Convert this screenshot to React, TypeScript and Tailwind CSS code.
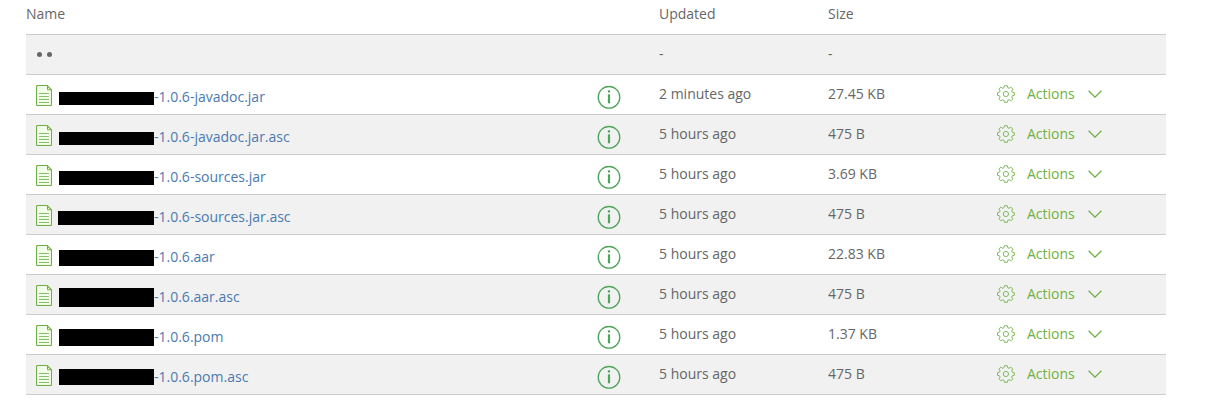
import { clsx } from 'clsx'

type FileRow = {
  suffix: string
  updated: string
  size: string
  mask: string
}

const files: FileRow[] = [
  { suffix: '-1.0.6-javadoc.jar', updated: '2 minutes ago', size: '27.45 KB', mask: 'w-[95px] h-[13px] mt-0.5' },
  { suffix: '-1.0.6-javadoc.jar.asc', updated: '5 hours ago', size: '475 B', mask: 'w-[95px] h-[13px] mt-0.5' },
  { suffix: '-1.0.6-sources.jar', updated: '5 hours ago', size: '3.69 KB', mask: 'w-[95px] h-[14px] mt-0.5' },
  { suffix: '-1.0.6-sources.jar.asc', updated: '5 hours ago', size: '475 B', mask: 'w-[96px] h-[14px] mt-0.5' },
  { suffix: '-1.0.6.aar', updated: '5 hours ago', size: '22.83 KB', mask: 'w-[95px] h-[16px] mt-0.5' },
  { suffix: '-1.0.6.aar.asc', updated: '5 hours ago', size: '475 B', mask: 'w-[95px] h-[19px]' },
  { suffix: '-1.0.6.pom', updated: '5 hours ago', size: '1.37 KB', mask: 'w-[95px] h-[17px]' },
  { suffix: '-1.0.6.pom.asc', updated: '5 hours ago', size: '475 B', mask: 'w-[95px] h-[16px]' },
]

function DocumentIcon() {
  return (
    <svg width="16" height="21" viewBox="0 0 16 21" fill="none" stroke="#6db144" aria-hidden="true">
      <path d="M.5 1.5a1 1 0 0 1 1-1h9.7l4.3 4.3v14.7a1 1 0 0 1-1 1h-13a1 1 0 0 1-1-1z" fill="#f3fbec" strokeWidth="1.1" />
      <path d="M11.5.8v4h3.8" />
      <path d="M3 8.5h10M3 11.5h10M3 14.5h10M3 17.5h10" strokeWidth=".8" />
    </svg>
  )
}

function InfoIcon() {
  return (
    <svg width="24" height="24" viewBox="0 0 24 24" fill="none" stroke="#4fa65b" aria-hidden="true">
      <circle cx="12" cy="12.3" r="10.8" strokeWidth="1.3" />
      <path d="M12 9.3v9" strokeWidth="2.2" />
      <path d="M12 5.3v2.2" strokeWidth="2.2" />
    </svg>
  )
}

function GearIcon() {
  return (
    <svg width="18" height="18" viewBox="0 0 18 18" fill="none" stroke="#7fbb5c" strokeLinejoin="round" aria-hidden="true">
      <path d="M7.1.3h2.8l.5 2 1.3.6 1.8-1.1 1.9 1.9-1.1 1.8.6 1.3 2 .5v2.6l-2 .5-.6 1.3 1.1 1.8-1.9 1.9-1.8-1.1-1.3.6-.5 2H7.1l-.5-2-1.3-.6-1.8 1.1-1.9-1.9 1.1-1.8-.6-1.3-2-.5V7.3l2-.5.6-1.3-1.1-1.8 1.9-1.9 1.8 1.1 1.3-.6z" transform="translate(.4 .4)" />
      <circle cx="8.9" cy="9" r="2.6" />
    </svg>
  )
}

function ChevronIcon() {
  return (
    <svg width="14" height="8" viewBox="0 0 14 8" fill="none" stroke="#6db144" strokeWidth="1.3" aria-hidden="true">
      <path d="M.6.8 7 7.1 13.4.8" />
    </svg>
  )
}

export default function App() {
  return (
    <main className="bg-white pl-[26px] pr-[53px] font-['Open_Sans','Noto_Sans',sans-serif] text-sm text-[#666]">
      <table className="w-full table-fixed border-collapse text-left">
        <colgroup>
          <col />
          <col className="w-[169px]" />
          <col className="w-[169px]" />
          <col className="w-[169px]" />
        </colgroup>
        <thead>
          <tr className="h-[34px] align-top">
            <th className="pt-1 font-normal">Name</th>
            <th className="pt-1 font-normal">Updated</th>
            <th className="pt-1 font-normal">Size</th>
            <th aria-label="Actions" />
          </tr>
        </thead>
        <tbody>
          <tr className="h-10 border-y border-[#ccc] bg-[#f1f1f1]">
            <td className="pl-[11px]">
              <a href="#parent" aria-label="Parent directory" className="flex gap-[5px]">
                <span className="h-[5px] w-[5px] rounded-full bg-[#666]" />
                <span className="h-[5px] w-[5px] rounded-full bg-[#666]" />
              </a>
            </td>
            <td>-</td>
            <td>-</td>
            <td />
          </tr>
          {files.map((file, i) => (
            <tr
              key={file.suffix}
              className={clsx('h-10 border-b border-[#ccc]', i % 2 === 1 && 'bg-[#f1f1f1]')}
            >
              <td className="pl-[10px] pr-[38px] pt-0.5">
                <div className="flex items-center">
                  <DocumentIcon />
                  <a href="#file" className="flex items-center pt-1 text-[#4a7ab0]">
                    <span className="flex w-[102px] justify-end">
                      <span className={clsx('bg-black', file.mask)} />
                    </span>
                    {file.suffix}
                  </a>
                  <button type="button" aria-label="File info" className="ml-auto pt-1">
                    <InfoIcon />
                  </button>
                </div>
              </td>
              <td>{file.updated}</td>
              <td>{file.size}</td>
              <td>
                <button type="button" className="flex items-center text-[#6db144]">
                  <GearIcon />
                  <span className="ml-3 mr-[13px]">Actions</span>
                  <ChevronIcon />
                </button>
              </td>
            </tr>
          ))}
        </tbody>
      </table>
    </main>
  )
}
